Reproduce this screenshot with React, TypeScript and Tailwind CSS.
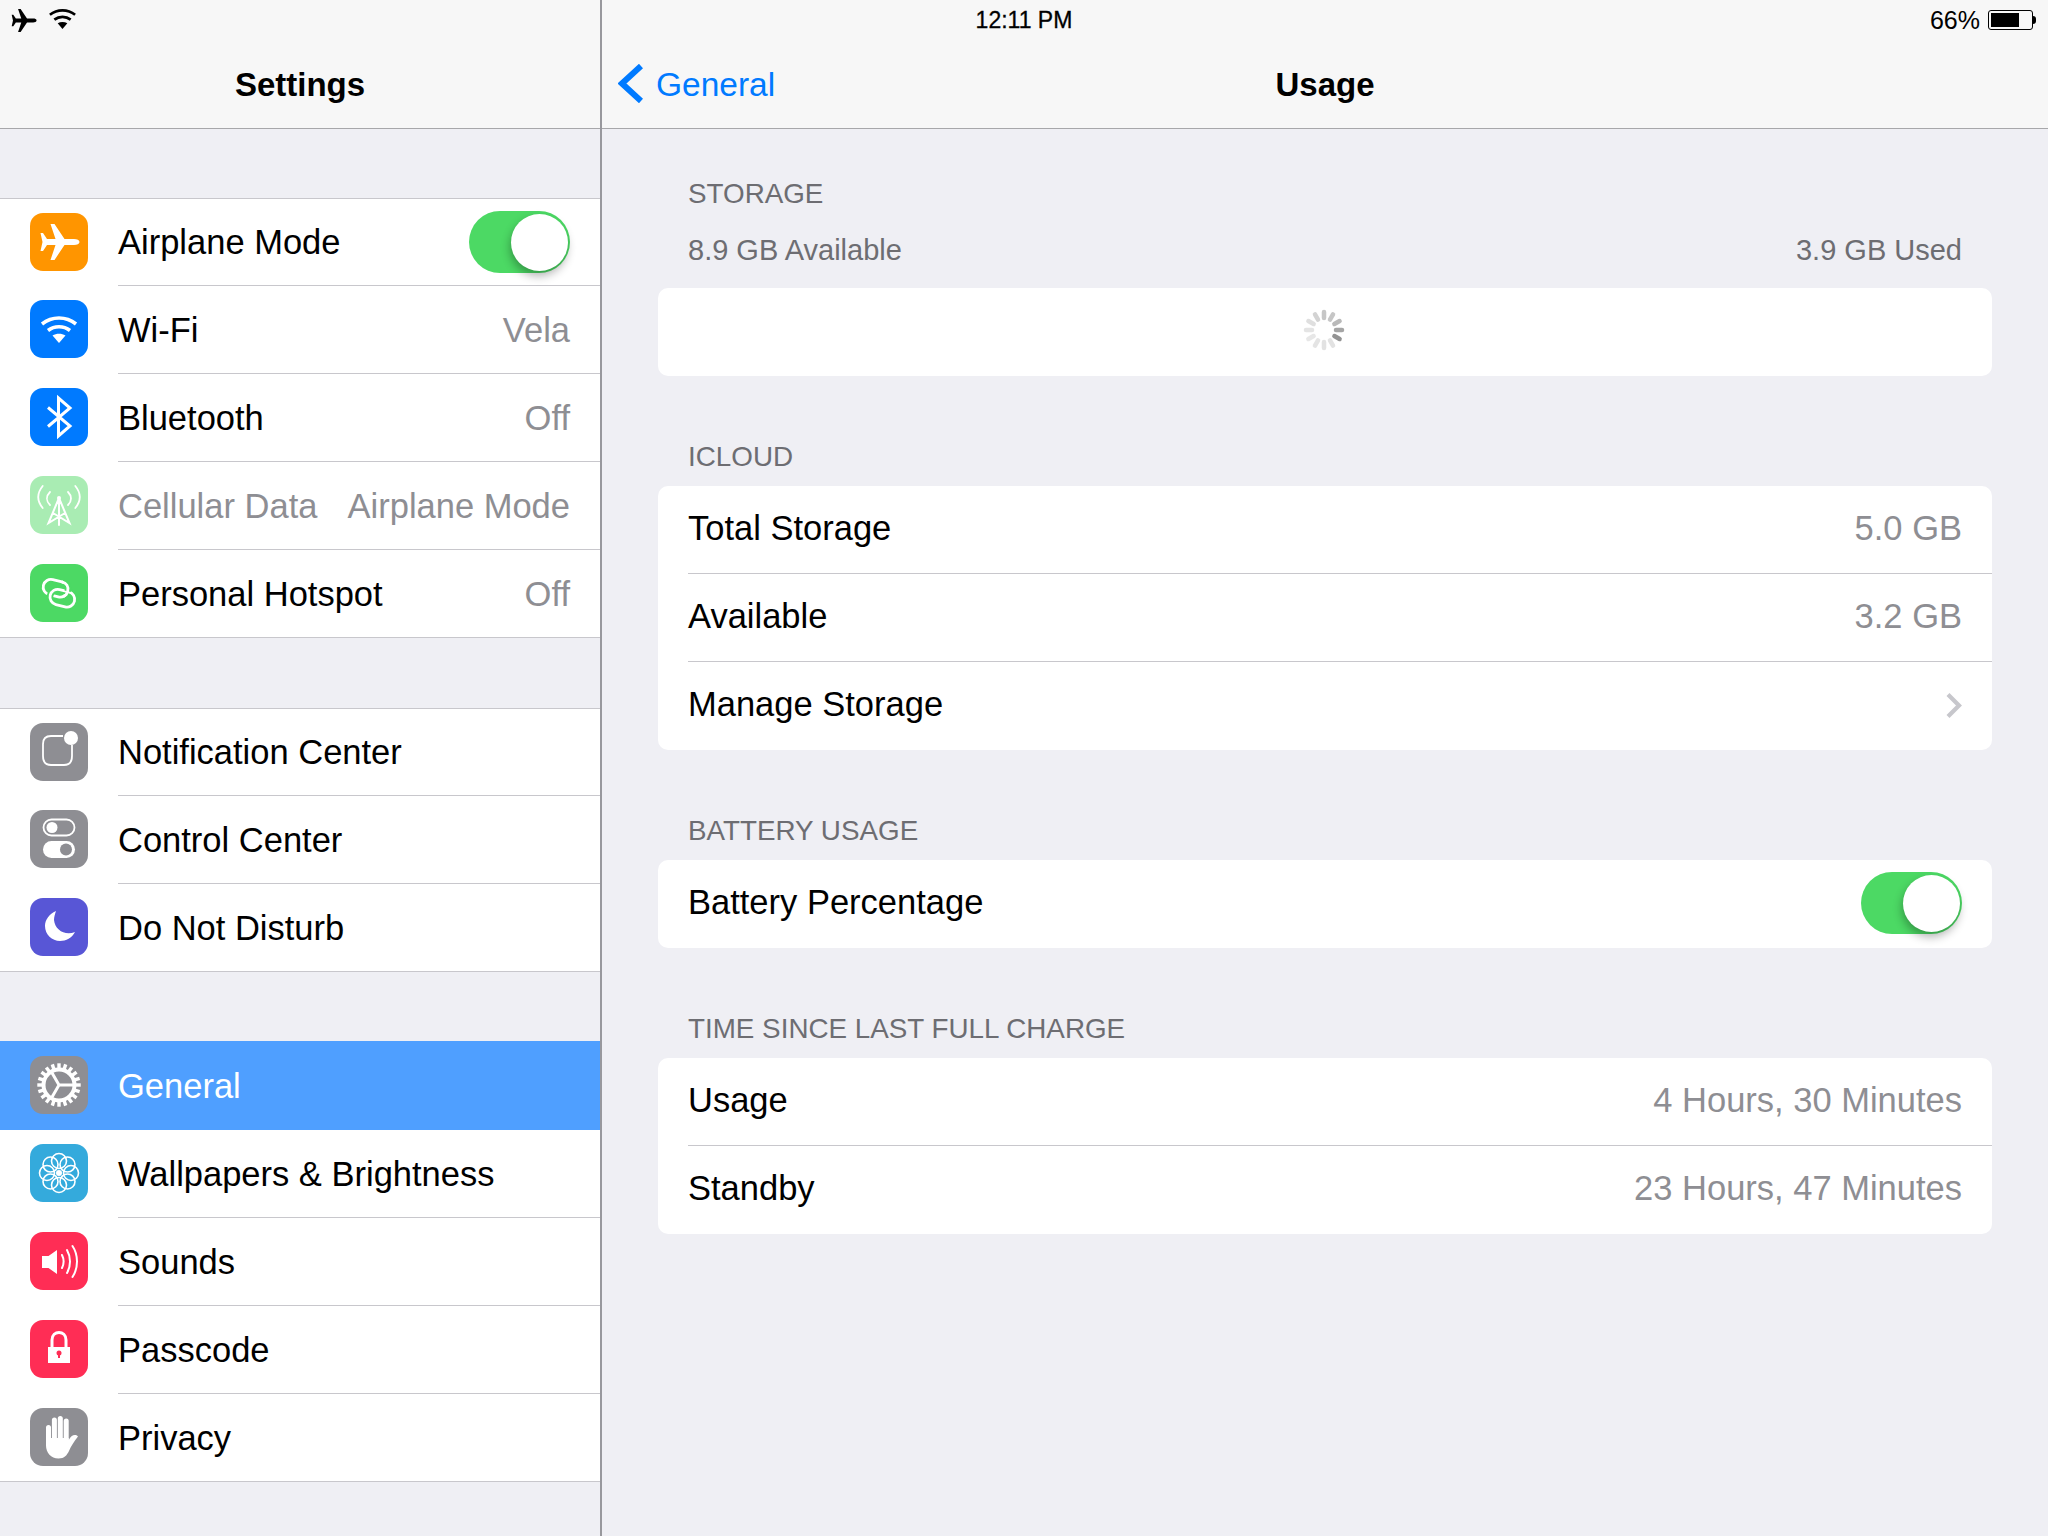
import type { ReactNode } from "react";

const Plane = ({ className }: { className?: string }) => (
  <svg viewBox="0 0 58 58" className={className} fill="currentColor">
    <path d="M49.5 29c0-2-2.5-3-5.5-3H34.5L24.5 11H20.5l5 15H17l-4-6h-2.5l2 9-2 9H13l4-6h8.5l-5 15h4l10-15H44c3 0 5.5-1 5.5-3z" />
  </svg>
);

const Wifi = ({ className }: { className?: string }) => (
  <svg viewBox="0 0 58 58" className={className} fill="none" stroke="currentColor" strokeWidth="3.6">
    <path d="M12 24c10-8 24-8 34 0" />
    <path d="M18 30.5c6.5-5 15.5-5 22 0" />
    <path fill="currentColor" stroke="none" d="M22.5 35.5c4-2.5 9-2.5 13 0L29 43z" />
  </svg>
);

const Bluetooth = () => (
  <svg viewBox="0 0 58 58" className="size-full" fill="none" stroke="white" strokeWidth="3">
    <path d="M18 19.5 L40 38 L28.5 48 V10 L40 20 L18 38.5" />
  </svg>
);

const Cellular = () => (
  <svg viewBox="0 0 58 58" className="size-full" fill="none" stroke="white" strokeWidth="1.8" strokeLinecap="round">
    <path d="M12.7 10C7 17 7 25 12.7 32M45.3 10C51 17 51 25 45.3 32M20 16C16 20 16 25 20 29M38 16C42 20 42 25 38 29" />
    <path strokeWidth="2" d="M29 22V49M29 22L18.5 47L35 37M29 22L39.5 47L23 37" />
    <circle cx="29" cy="22" r="2" fill="white" stroke="none" />
  </svg>
);

// two links: the second passes over the first, then the first's top arc passes back over it
const Hotspot = () => (
  <svg viewBox="0 0 58 58" className="size-full" fill="none" strokeWidth="2.8">
    <g transform="rotate(14 29 29)">
      <rect x="12" y="17.5" width="25" height="15.5" rx="7.75" stroke="white" />
      <rect x="21" y="25.5" width="25" height="15.5" rx="7.75" stroke="#4cd964" strokeWidth="6.5" />
      <rect x="21" y="25.5" width="25" height="15.5" rx="7.75" stroke="white" />
      <path d="M31 17.5C34.5 17.5 37 20.5 37 25.2" stroke="#4cd964" strokeWidth="6.5" />
      <path d="M29 17.5C34 17.5 37 20.500 37 25.2C37 28 36 30 34 31.5" stroke="white" />
    </g>
  </svg>
);

const Notification = () => (
  <svg viewBox="0 0 58 58" className="size-full" fill="none" stroke="white" strokeWidth="1.8">
    <path d="M33 13H21C16 13 13 16 13 21V33C13 39 16 42 21 42H34C39 42 42 39 42 33V22" />
    <circle cx="41" cy="15" r="7" fill="white" stroke="none" />
  </svg>
);

const ControlCenter = () => (
  <svg viewBox="0 0 58 58" className="size-full">
    <rect x="13.5" y="9.5" width="31" height="16" rx="8" fill="none" stroke="white" strokeWidth="1.8" />
    <circle cx="22" cy="17.5" r="5.5" fill="white" />
    <rect x="13" y="31" width="32" height="17" rx="8.5" fill="white" />
    <circle cx="36" cy="39.5" r="6" fill="#8e8e93" />
  </svg>
);

const Moon = () => (
  <svg viewBox="0 0 58 58" className="size-full" fill="white">
    <path d="M26 13C19 16 15 22 15 28C15 36.5 22 43 30 43C36 43 42 40 45 34C35 38 25 32 24 22C24 19 25 16 26 13z" />
  </svg>
);

const Gear = () => {
  const teeth = Array.from({ length: 20 }, (_, i) => i * 18);
  return (
    <svg viewBox="0 0 58 58" className="size-full" fill="none" stroke="white">
      {teeth.map((a) => (
        <rect key={a} x="27.3" y="7.3" width="3.4" height="7" fill="white" stroke="none" transform={`rotate(${a} 29 29)`} />
      ))}
      <circle cx="29" cy="29" r="15.5" strokeWidth="4" />
      <path strokeWidth="3" d="M29 29H44M29 29L21.5 16M29 29L21.5 42" />
    </svg>
  );
};

const Flower = () => {
  const petals = Array.from({ length: 8 }, (_, i) => i * 45);
  return (
    <svg viewBox="0 0 58 58" className="size-full" fill="none" stroke="white" strokeWidth="1.6">
      {petals.map((a) => (
        <circle key={a} cx="29" cy="17" r="7.5" transform={`rotate(${a} 29 29)`} />
      ))}
      <circle cx="29" cy="29" r="3" fill="white" stroke="none" />
    </svg>
  );
};

const Sound = () => (
  <svg viewBox="0 0 58 58" className="size-full" fill="none" stroke="white" strokeWidth="2" strokeLinecap="round">
    <path fill="white" stroke="none" d="M12 24H18.5L27 18V42L18.5 36H12z" />
    <path d="M32 23C34 27 34 32 32 36M37 18C41 25 41 34 37 41M42.5 14C48.5 23 48.5 36 42.5 45" />
  </svg>
);

const Lock = () => (
  <svg viewBox="0 0 58 58" className="size-full">
    <path d="M22 28V20C22 10 36 10 36 20V28" fill="none" stroke="white" strokeWidth="3" />
    <rect x="18" y="27" width="22" height="16" fill="white" />
    <circle cx="29" cy="33" r="2.5" fill="#ff2d55" />
    <rect x="28" y="33" width="2" height="5" fill="#ff2d55" />
  </svg>
);

const Hand = () => (
  <svg viewBox="0 0 58 58" className="size-full" fill="white">
    <rect x="16" y="17" width="5" height="22" rx="2.5" />
    <rect x="21.9" y="9.5" width="5" height="25" rx="2.5" />
    <rect x="27.8" y="8" width="5" height="27" rx="2.5" />
    <rect x="33.7" y="10.5" width="5" height="25" rx="2.5" />
    <path d="M16 30V37C16 45 21 50.5 28.500 50.5C34.500 50.5 37 47 39 43C41 38.500 43.500 34 48 28.500C45 25.500 41 27.500 38.700 32V30z" />
  </svg>
);

const Chevron = ({ className }: { className?: string }) => (
  <svg viewBox="0 0 16 25" className={className} fill="none" stroke="#c7c7cc" strokeWidth="4.2">
    <path d="M2 1.5 L13 12.5 L2 23.5" />
  </svg>
);

const Toggle = () => (
  <div className="flex h-[62px] w-[101px] items-center justify-end rounded-full bg-[#4cd964] pr-[2px]">
    <div className="size-[57px] rounded-full bg-white shadow-[-1px_5px_10px_rgba(0,0,0,0.3)]" />
  </div>
);

const Spinner = () => {
  const opacities = [0.22, 0.22, 0.27, 0.35, 0.42, 0.11, 0.11, 0.1, 0.09, 0.1, 0.12, 0.17];
  return (
    <svg viewBox="0 0 44 44" className="size-[44px]" strokeWidth="4.5" strokeLinecap="round" stroke="#000">
      {opacities.map((o, i) => (
        <line key={i} x1="22" y1="4" x2="22" y2="10" opacity={o} transform={`rotate(${i * 30} 22 22)`} />
      ))}
    </svg>
  );
};

type Item = {
  icon: ReactNode;
  color: string;
  label: string;
  value?: string;
  toggle?: boolean;
  dim?: boolean;
  active?: boolean;
};

const SideRow = ({ item, first, last }: { item: Item; first: boolean; last: boolean }) => (
  <div
    className={`flex items-center pl-[30px] ${item.active ? "h-[89px] bg-[#4f9fff]" : "h-[88px] bg-white"} ${
      first && !item.active ? "border-t border-[#c8c7cc]" : ""
    } ${last ? "border-b border-[#c8c7cc]" : ""}`}
  >
    <div className={`-mt-[2px] size-[58px] shrink-0 overflow-hidden rounded-[13px] ${item.color}`}>{item.icon}</div>
    <div
      className={`ml-[30px] flex h-full min-w-0 flex-1 items-center justify-between pr-[30px] ${
        last || item.active ? "" : "border-b border-[#c8c7cc]"
      }`}
    >
      <span className={`pt-[2px] ${item.active ? "text-white" : item.dim ? "text-[#8e8e93]" : "text-black"}`}>{item.label}</span>
      {item.value && <span className="pt-[2px] text-[#8e8e93]">{item.value}</span>}
      {item.toggle && <Toggle />}
    </div>
  </div>
);

const SideGroup = ({ items, className }: { items: Item[]; className?: string }) => (
  <div className={className}>
    {items.map((item, i) => (
      <SideRow key={item.label} item={item} first={i === 0} last={i === items.length - 1} />
    ))}
  </div>
);

const Card = ({ children }: { children: ReactNode }) => (
  <div className="overflow-hidden rounded-[10px] bg-white">{children}</div>
);

const CardRow = ({ label, value, last, children }: { label: string; value?: string; last?: boolean; children?: ReactNode }) => (
  <div className="h-[88px] pl-[30px]">
    <div className={`flex h-full items-center justify-between pr-[30px] pb-[2px] ${last ? "" : "border-b border-[#c8c7cc]"}`}>
      <span className="text-black">{label}</span>
      {value && <span className="text-[#8e8e93]">{value}</span>}
      {children}
    </div>
  </div>
);

const SectionLabel = ({ children }: { children: ReactNode }) => (
  <div className="mt-[66px] mb-[14px] pl-[30px] text-[27.8px] leading-[30px] text-[#6d6d72]">{children}</div>
);

const group1: Item[] = [
  { icon: <Plane className="size-full text-white" />, color: "bg-[#ff9500]", label: "Airplane Mode", toggle: true },
  { icon: <Wifi className="size-full text-white" />, color: "bg-[#007aff]", label: "Wi-Fi", value: "Vela" },
  { icon: <Bluetooth />, color: "bg-[#007aff]", label: "Bluetooth", value: "Off" },
  { icon: <Cellular />, color: "bg-[#a9ecb3]", label: "Cellular Data", value: "Airplane Mode", dim: true },
  { icon: <Hotspot />, color: "bg-[#4cd964]", label: "Personal Hotspot", value: "Off" },
];

const group2: Item[] = [
  { icon: <Notification />, color: "bg-[#8e8e93]", label: "Notification Center" },
  { icon: <ControlCenter />, color: "bg-[#8e8e93]", label: "Control Center" },
  { icon: <Moon />, color: "bg-[#5856d6]", label: "Do Not Disturb" },
];

const group3: Item[] = [
  { icon: <Gear />, color: "bg-[#8e8e93]", label: "General", active: true },
  { icon: <Flower />, color: "bg-[#34aadc]", label: "Wallpapers & Brightness" },
  { icon: <Sound />, color: "bg-[#ff2d55]", label: "Sounds" },
  { icon: <Lock />, color: "bg-[#ff2d55]", label: "Passcode" },
  { icon: <Hand />, color: "bg-[#8e8e93]", label: "Privacy" },
];

export default function App() {
  return (
    <div className="relative flex h-[1536px] w-[2048px] overflow-hidden bg-[#efeff4] font-['Liberation_Sans',sans-serif] text-[34.5px]">
      {/* status bar sits over both nav bars */}
      <div className="absolute inset-x-0 top-0 z-10 grid h-[40px] grid-cols-3 items-center text-black">
        <div className="flex items-center pl-[5px]">
          <Plane className="size-[37px]" />
          <Wifi className="-mt-[4px] -ml-px size-[43px]" />
        </div>
        <div className="pt-px text-center text-[23px] [-webkit-text-stroke:0.3px_black]">12:11 PM</div>
        <div className="flex items-center justify-end pr-[12px]">
          <span className="pt-px text-[25px]">66%</span>
          <div className="ml-[8px] h-[20px] w-[45px] rounded-[3px] border border-black p-[2px]">
            <div className="h-full w-[28px] bg-black" />
          </div>
          <div className="h-[8px] w-[3px] rounded-r-full bg-black" />
        </div>
      </div>

      <aside className="w-[602px] shrink-0 border-r-2 border-[#98989d]">
        <div className="flex h-[129px] items-center justify-center border-b border-[#a7a7aa] bg-[#f7f7f7] pt-[40px] font-bold">
          <span className="text-[33px] leading-none">Settings</span>
        </div>
        <div className="pt-[69px]">
          <SideGroup items={group1} className="mb-[70px]" />
          <SideGroup items={group2} className="mb-[69px]" />
          <SideGroup items={group3} />
        </div>
      </aside>

      <main className="min-w-0 flex-1">
        <div className="relative flex h-[129px] items-center justify-center border-b border-[#a7a7aa] bg-[#f7f7f7] pt-[40px]">
          <div className="absolute bottom-[25px] left-[16px] flex h-[39px] items-center text-[#007aff]">
            <svg viewBox="0 0 25 39" className="h-[39px] w-[25px]" fill="none" stroke="#007aff" strokeWidth="6">
              <path d="M23 2 L4 19.5 L23 37" />
            </svg>
            <span className="ml-[13px] pt-[3px] text-[33.5px]">General</span>
          </div>
          <span className="text-[33px] leading-none font-bold">Usage</span>
        </div>

        <div className="px-[56px] pt-[50px]">
          <div className="pl-[30px] text-[27.8px] leading-[30px] text-[#6d6d72]">STORAGE</div>
          <div className="mt-[26px] mb-[23px] flex justify-between px-[30px] text-[29px] leading-[30px] text-[#6d6d72]">
            <span>8.9 GB Available</span>
            <span>3.9 GB Used</span>
          </div>
          <Card>
            <div className="flex h-[88px] items-center justify-center pr-[3px] pb-[4px]">
              <Spinner />
            </div>
          </Card>

          <SectionLabel>ICLOUD</SectionLabel>
          <Card>
            <CardRow label="Total Storage" value="5.0 GB" />
            <CardRow label="Available" value="3.2 GB" />
            <CardRow label="Manage Storage" last>
              <Chevron className="h-[25px] w-[16px]" />
            </CardRow>
          </Card>

          <SectionLabel>BATTERY USAGE</SectionLabel>
          <Card>
            <CardRow label="Battery Percentage" last>
              <Toggle />
            </CardRow>
          </Card>

          <SectionLabel>TIME SINCE LAST FULL CHARGE</SectionLabel>
          <Card>
            <CardRow label="Usage" value="4 Hours, 30 Minutes" />
            <CardRow label="Standby" value="23 Hours, 47 Minutes" last />
          </Card>
        </div>
      </main>
    </div>
  );
}
